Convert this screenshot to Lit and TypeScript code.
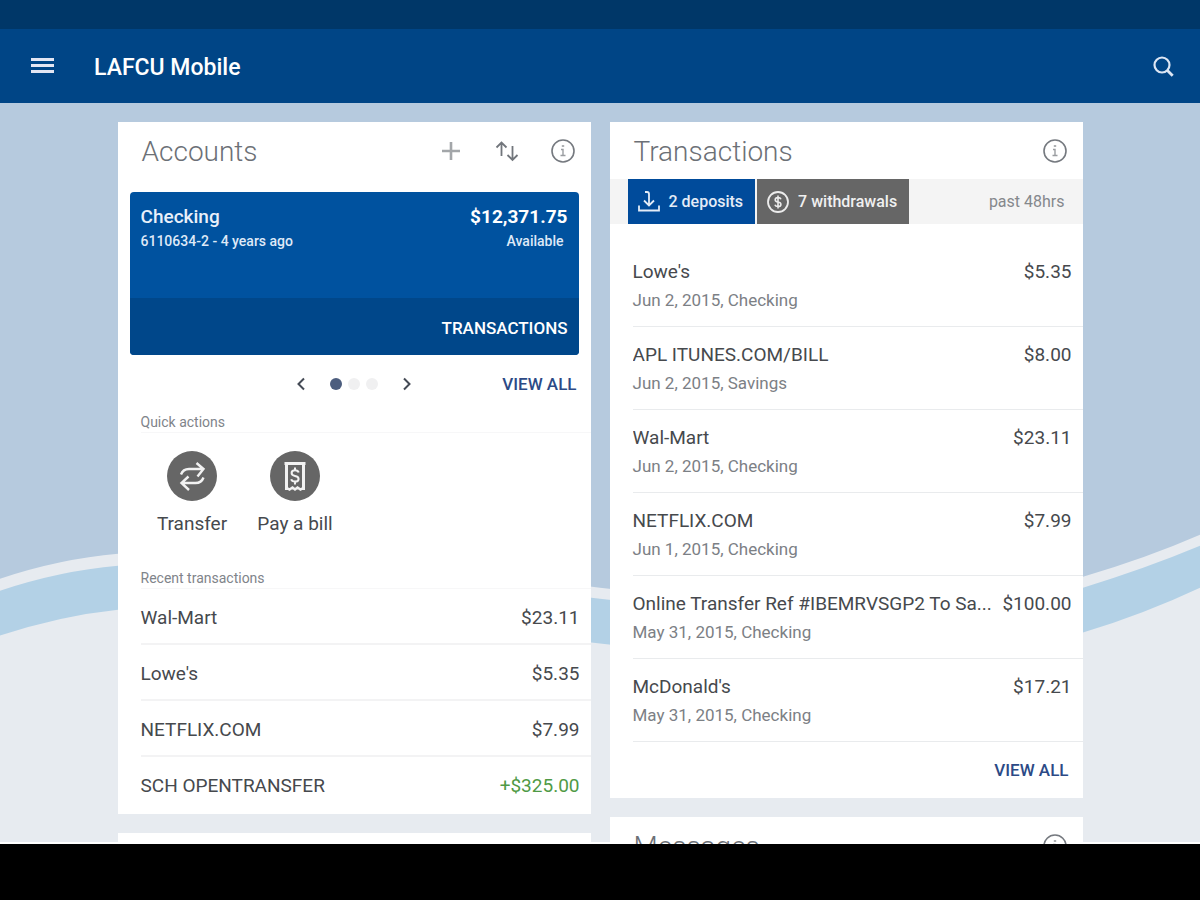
import { LitElement, html, css, svg, nothing } from "lit";
import { customElement, property, state } from "lit/decorators.js";
import { classMap } from "lit/directives/class-map.js";

const infoIcon = html`<svg viewBox="0 0 24 24" width="24" height="24" fill="none" stroke="#75797f" stroke-width="1.6" aria-hidden="true">
  <circle cx="12" cy="12" r="11" />
  <path d="M10 10.5h2v6M9.5 16.5h5" stroke="#9a9da1" stroke-width="1.4" />
  <path d="M10.8 7h2.4" stroke="#9a9da1" />
</svg>`;

const plusIcon = html`<svg viewBox="0 0 24 24" width="24" height="24" aria-hidden="true">
  <path d="M12 3v18M3 12h18" stroke="#a3a6a9" stroke-width="2.6" />
</svg>`;

const sortIcon = html`<svg viewBox="0 0 24 24" width="24" height="24" fill="none" stroke="#72767c" stroke-width="1.8" aria-hidden="true">
  <path d="M6.5 17V4M1.5 8.5l5-5 5 5M17.5 7v13.5M12.5 16l5 5 5-5" />
</svg>`;

const depositIcon = html`<svg viewBox="0 0 24 24" width="24" height="24" fill="none" stroke="#e4ecf7" stroke-width="1.8" aria-hidden="true">
  <path d="M8 2h2q2 0 2 2v11M7 10.500l5 5 5-5M2 15.500v5h20v-5" />
</svg>`;

const coinIcon = html`<svg viewBox="0 0 24 24" width="24" height="24" fill="none" stroke="#ececec" stroke-width="1.8" aria-hidden="true">
  <circle cx="12" cy="12" r="10" />
  <path d="M15 9.300q-.6-1.700-3-1.700-2.800 0-2.800 2.100 0 1.900 2.800 2.300 2.900.4 2.900 2.400 0 2.100-2.900 2.100-2.500 0-3.100-1.800M12 5.500v13" stroke-width="1.600" />
</svg>`;

const transferIcon = html`<svg viewBox="0 0 50 50" width="50" height="50" fill="none" stroke="#f2f2f2" stroke-width="2.400" aria-hidden="true">
  <path d="M14 23.500q2-5.500 8-5.500h14M29.500 12l7 6-6 7.500M36.500 26.500q-2 5.500-8 5.500H15M21.500 25.500l-7 6.500 7.500 7" />
</svg>`;

const billIcon = html`<svg viewBox="0 0 50 50" width="50" height="50" fill="none" stroke="#f2f2f2" stroke-width="2.400" aria-hidden="true">
  <path d="M14.500 12.500h21M16.500 12v27M33.500 12v27" stroke-width="3" />
  <path d="M16 36.500l3.500 2 3-2 2.500 2 2.500-2 3 2 3.500-2" />
  <path d="M28.700 21.500q-.7-2.200-3.700-2.200-3.400 0-3.400 2.700 0 2.300 3.400 2.900 3.600.6 3.600 3 0 2.700-3.600 2.700-3.200 0-3.800-2.300M25 16.500v3M25 30.500v3" stroke-width="2" />
</svg>`;

@customElement("dash-card")
class DashCard extends LitElement {
  @property() heading = "";
  @property({ type: Boolean }) tools = false;

  static styles = css`
    :host {
      display: block;
      background: #fff;
    }
    .head {
      display: flex;
      align-items: center;
      height: 57px;
      padding: 0 16px 0 24px;
    }
    .title {
      flex: 1;
      margin: 0;
      padding-top: 2px;
      font-size: 28px;
      line-height: 32px;
      font-weight: 300;
      color: #6c7076;
    }
    .tools {
      display: flex;
      gap: 32px;
    }
    .tool {
      display: block;
      padding: 0;
      border: 0;
      background: none;
      cursor: pointer;
    }
    svg {
      display: block;
    }
  `;

  render() {
    return html`
      <header class="head">
        <h2 class="title">${this.heading}</h2>
        <div class="tools">
          ${this.tools
            ? html`<button class="tool" aria-label="Add account">${plusIcon}</button>
                <button class="tool" aria-label="Reorder">${sortIcon}</button>`
            : nothing}
          <button class="tool" aria-label="About ${this.heading}">${infoIcon}</button>
        </div>
      </header>
      <slot></slot>
    `;
  }
}

interface Entry {
  name: string;
  amount: string;
  detail?: string;
  credit?: boolean;
}

@customElement("app-root")
class AppRoot extends LitElement {
  @state() private page = 0;

  private recent: Entry[] = [
    { name: "Wal-Mart", amount: "$23.11" },
    { name: "Lowe's", amount: "$5.35" },
    { name: "NETFLIX.COM", amount: "$7.99" },
    { name: "SCH OPENTRANSFER", amount: "+$325.00", credit: true },
  ];

  private history: Entry[] = [
    { name: "Lowe's", detail: "Jun 2, 2015, Checking", amount: "$5.35" },
    { name: "APL ITUNES.COM/BILL", detail: "Jun 2, 2015, Savings", amount: "$8.00" },
    { name: "Wal-Mart", detail: "Jun 2, 2015, Checking", amount: "$23.11" },
    { name: "NETFLIX.COM", detail: "Jun 1, 2015, Checking", amount: "$7.99" },
    { name: "Online Transfer Ref #IBEMRVSGP2 To Sa...", detail: "May 31, 2015, Checking", amount: "$100.00" },
    { name: "McDonald's", detail: "May 31, 2015, Checking", amount: "$17.21" },
  ];

  static styles = css`
    :host {
      display: flex;
      flex-direction: column;
      height: 100vh;
      font-family: Roboto, "Liberation Sans", sans-serif;
      color: #46494d;
      background: #000;
    }
    * {
      box-sizing: border-box;
    }
    button {
      font: inherit;
      color: inherit;
      padding: 0;
      border: 0;
      background: none;
      cursor: pointer;
    }
    a {
      text-decoration: none;
    }
    svg {
      display: block;
    }
    ul {
      list-style: none;
      margin: 0;
      padding: 0;
    }
    .status {
      flex: none;
      height: 29px;
      background: #003768;
    }
    .bar {
      flex: none;
      display: flex;
      align-items: center;
      height: 74px;
      padding: 0 25px 0 30px;
      background: #004586;
      color: #fff;
    }
    .brand {
      flex: 1;
      margin: 0;
      padding: 4px 0 0 39px;
      font-size: 23px;
      line-height: 28px;
      font-weight: 500;
    }
    .stage {
      position: relative;
      flex: 1;
      min-height: 0;
      background: #fff;
    }
    .scene {
      position: absolute;
      inset: 0;
      width: 100%;
      height: calc(100% - 2px);
    }
    .scroll {
      position: relative;
      height: 100%;
      overflow: auto;
      scrollbar-width: none;
      padding: 19px 24px 0;
    }
    .columns {
      display: grid;
      grid-template-columns: 1fr 1fr;
      align-items: start;
      gap: 19px;
      max-width: 965px;
      margin: 0 auto;
    }
    .column {
      display: grid;
      gap: 19px;
      min-width: 0;
    }
    .account {
      margin: 13px 12px 0;
      border-radius: 4px;
      overflow: hidden;
      background: #00529f;
      color: #fff;
    }
    .summary {
      display: flex;
      justify-content: space-between;
      min-height: 106px;
      padding: 12px 11px 0;
    }
    .kind {
      font-size: 19px;
      line-height: 26px;
      font-weight: 500;
      color: #e9f0fa;
    }
    .balance {
      font-size: 19px;
      line-height: 26px;
      font-weight: 700;
    }
    .meta {
      font-size: 14px;
      line-height: 22px;
      font-weight: 500;
      color: #dfe9f7;
    }
    .right {
      text-align: right;
    }
    .right .meta {
      padding-right: 4px;
    }
    .open {
      display: block;
      height: 57px;
      padding: 2px 11px 0;
      background: #00478a;
      color: #fff;
      font-size: 17px;
      line-height: 56px;
      font-weight: 500;
      text-align: right;
    }
    .pager {
      display: grid;
      grid-template-columns: 1fr auto 1fr;
      align-items: center;
      height: 57px;
      padding: 0 14px;
    }
    .steps {
      display: flex;
      align-items: center;
      gap: 20px;
    }
    .dots {
      display: flex;
      gap: 6px;
    }
    .dot {
      width: 12px;
      height: 12px;
      border-radius: 50%;
      background: #f0f0f1;
    }
    .dot.on {
      background: #4c5d7e;
    }
    .link {
      font-size: 17px;
      line-height: 24px;
      font-weight: 500;
      color: #2c4a86;
    }
    .pager .link {
      grid-column: 3;
      justify-self: end;
    }
    .pager .steps {
      grid-column: 2;
    }
    .label {
      margin: 0 0 0 23px;
      font-size: 14px;
      line-height: 20px;
      font-weight: 400;
      color: #80848a;
      border-bottom: 1px solid #f7f7f8;
    }
    .actions {
      display: flex;
      gap: 4px;
      padding: 18px 0 29px 25px;
    }
    .action {
      display: flex;
      flex-direction: column;
      align-items: center;
      gap: 8px;
      width: 99px;
      font-size: 19px;
      line-height: 30px;
    }
    .disc {
      border-radius: 50%;
      background: #666;
    }
    .rows {
      padding-left: 23px;
    }
    .row {
      display: flex;
      justify-content: space-between;
      gap: 16px;
      font-size: 19px;
      line-height: 24px;
      padding: 17px 11px 13px 0;
      border-bottom: 2px solid #f3f3f4;
    }
    .row:last-child {
      padding-bottom: 16px;
      border-bottom: 0;
    }
    .credit {
      color: #4f9a45;
    }
    .filters {
      display: flex;
      align-items: center;
      gap: 2px;
      height: 45px;
      margin-bottom: 20px;
      padding: 0 18px;
      background: #f4f4f4;
      font-size: 16px;
      line-height: 24px;
    }
    .filter {
      display: flex;
      align-items: center;
      gap: 8px;
      height: 45px;
      padding: 0 12px 0 9px;
      background: #666;
      color: #f0f0f0;
      font-weight: 500;
    }
    .filter.in {
      background: #004b9b;
      color: #e4ecf7;
    }
    .span {
      flex: 1;
      text-align: right;
      color: #85888c;
    }
    .entry {
      display: grid;
      grid-template-columns: minmax(0, 1fr) auto;
      column-gap: 10px;
      height: 83px;
      padding: 14px 11px 0 0;
      border-bottom: 1px solid #e9ebed;
      font-size: 19px;
      line-height: 28px;
      align-content: start;
    }
    .name {
      overflow: hidden;
      white-space: nowrap;
      text-overflow: ellipsis;
    }
    .detail {
      font-size: 17px;
      line-height: 28px;
      color: #7c8085;
    }
    .more {
      display: flex;
      justify-content: flex-end;
      align-items: center;
      height: 56px;
      padding-right: 14px;
    }
    .nav {
      flex: none;
      height: 56px;
      background: #000;
    }
    @media (max-width: 760px) {
      .columns {
        grid-template-columns: 1fr;
      }
    }
  `;

  private move(step: number) {
    this.page = (this.page + step + 3) % 3;
  }

  private wave() {
    return svg`
      <rect x="0" y="0" width="1200" height="741" fill="#e7ebf0" />
      <g transform="translate(0 -103)">
        <path fill="#b3d1e6" d="M0 592Q60 572 118 567C300 551 430 581 600 600C760 618 930 630 1083 589Q1145 570 1200 547V589Q1145 615 1083 634C930 676 760 664 600 645C430 625 300 595 118 611Q60 617 0 637Z" />
        <path fill="#b6cade" d="M0 103H1200V536Q1145 560 1083 578C930 619 760 607 600 589C430 569 300 539 118 555Q60 560 0 580Z" />
      </g>`;
  }

  render() {
    return html`
      <div class="status"></div>
      <header class="bar">
        <button aria-label="Menu">
          <svg viewBox="0 0 25 24" width="25" height="24" aria-hidden="true">
            <path d="M1 5.500h23M1 11.500h23M1 17.500h23" stroke="#e3e6f3" stroke-width="3" />
          </svg>
        </button>
        <h1 class="brand">LAFCU Mobile</h1>
        <button aria-label="Search">
          <svg viewBox="0 0 24 24" width="24" height="24" fill="none" stroke="#dce6f4" aria-hidden="true">
            <circle cx="11" cy="11" r="7.500" stroke-width="2.200" />
            <path d="M16.200 16.200l5.500 5.500" stroke-width="2.800" />
          </svg>
        </button>
      </header>
      <main class="stage">
        <svg class="scene" viewBox="0 0 1200 741" preserveAspectRatio="none" aria-hidden="true">${this.wave()}</svg>
        <div class="scroll">
          <div class="columns">
            <div class="column">
              <dash-card heading="Accounts" tools>
                <section class="account">
                  <div class="summary">
                    <div>
                      <div class="kind">Checking</div>
                      <div class="meta">6110634-2 - 4 years ago</div>
                    </div>
                    <div class="right">
                      <div class="balance">$12,371.75</div>
                      <div class="meta">Available</div>
                    </div>
                  </div>
                  <a class="open" href="#transactions">TRANSACTIONS</a>
                </section>
                <div class="pager">
                  <div class="steps">
                    <button aria-label="Previous account" @click=${() => this.move(-1)}>
                      <svg viewBox="0 0 18 18" width="18" height="18" fill="none" stroke="#444a55" stroke-width="2" aria-hidden="true"><path d="M12 3.500L6.500 9l5.500 5.500" /></svg>
                    </button>
                    <div class="dots">
                      ${[0, 1, 2].map((i) => html`<span class=${classMap({ dot: true, on: i === this.page })}></span>`)}
                    </div>
                    <button aria-label="Next account" @click=${() => this.move(1)}>
                      <svg viewBox="0 0 18 18" width="18" height="18" fill="none" stroke="#444a55" stroke-width="2" aria-hidden="true"><path d="M6 3.500L11.500 9 6 14.500" /></svg>
                    </button>
                  </div>
                  <a class="link" href="#accounts">VIEW ALL</a>
                </div>
                <h3 class="label">Quick actions</h3>
                <div class="actions">
                  <button class="action"><span class="disc">${transferIcon}</span>Transfer</button>
                  <button class="action"><span class="disc">${billIcon}</span>Pay a bill</button>
                </div>
                <h3 class="label">Recent transactions</h3>
                <ul class="rows">
                  ${this.recent.map(
                    (t) => html`<li class="row">
                      <span>${t.name}</span><span class=${classMap({ credit: !!t.credit })}>${t.amount}</span>
                    </li>`
                  )}
                </ul>
              </dash-card>
              <dash-card></dash-card>
            </div>
            <div class="column">
              <dash-card heading="Transactions">
                <div class="filters">
                  <button class="filter in">${depositIcon}2 deposits</button>
                  <button class="filter">${coinIcon}7 withdrawals</button>
                  <span class="span">past 48hrs</span>
                </div>
                <ul class="rows">
                  ${this.history.map(
                    (t) => html`<li class="entry">
                      <span class="name">${t.name}</span><span>${t.amount}</span>
                      <span class="detail">${t.detail}</span>
                    </li>`
                  )}
                </ul>
                <div class="more"><a class="link" href="#transactions">VIEW ALL</a></div>
              </dash-card>
              <dash-card heading="Messages"></dash-card>
            </div>
          </div>
        </div>
      </main>
      <footer class="nav"></footer>
    `;
  }
}
